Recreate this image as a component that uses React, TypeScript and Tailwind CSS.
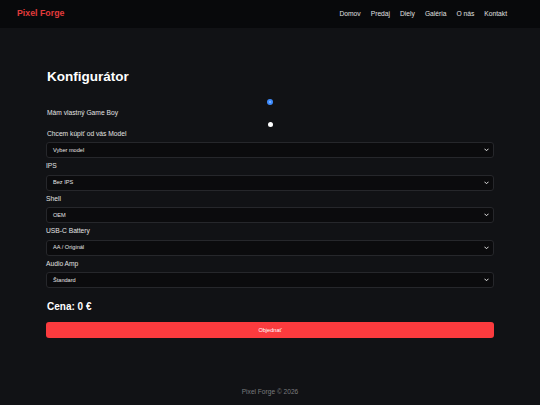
import React from "react";

const font = { fontFamily: '"Liberation Sans", Arial, sans-serif' };

function Chevron() {
  return (
    <svg width="5" height="4" viewBox="0 0 10 8" fill="none" className="shrink-0">
      <path d="M1.5 2 L5 5.5 L8.5 2" stroke="#e5e5e5" strokeWidth="2" strokeLinecap="round" strokeLinejoin="round" />
    </svg>
  );
}

function Select({ value, first }: { value: string; first?: boolean }) {
  return (
    <div
      role="combobox"
      className={`flex h-[16px] items-center justify-between rounded-[3px] border border-[#26272b] bg-[#0b0b0d] pl-[6px] pr-[4px] text-[5.6px] text-[#e5e5e5] ${
        first ? "mt-[4px]" : "mt-[4.5px]"
      }`}
    >
      <span>{value}</span>
      <Chevron />
    </div>
  );
}

function Label({ text }: { text: string }) {
  return (
    <div className="mt-[4px] h-[8px] text-[6.7px] leading-[8px] text-[#e2e2e2]">{text}</div>
  );
}

export default function App() {
  const nav = ["Domov", "Predaj", "Diely", "Galéria", "O nás", "Kontakt"];
  return (
    <div className="flex h-[405px] w-[540px] flex-col bg-[#111215]" style={font}>
      <header className="flex h-[28px] items-center justify-between bg-[#08090b] pl-[17px] pr-[33px]">
        <div className="text-[8.8px] font-bold text-[#e23b3b]">Pixel Forge</div>
        <nav className="flex gap-[10px] text-[6.7px] text-[#e0e0e0]">
          {nav.map((n) => (
            <span key={n}>{n}</span>
          ))}
        </nav>
      </header>
      <main className="flex flex-1 flex-col px-[46px]">
        <h1 className="ml-[1px] mt-[41px] h-[16px] text-[13.5px] font-bold leading-[16px] text-white">
          Konfigurátor
        </h1>
        <div className="mt-[12px] flex h-[10px] items-center justify-center">
          <span className="flex h-[6px] w-[6px] items-center justify-center rounded-full bg-[#3d8bfd]">
            <span className="h-[2px] w-[2px] rounded-full bg-[#8fbcff]" />
          </span>
        </div>
        <div className="ml-[1px] mt-[2px] h-[8px] text-[6.7px] leading-[8px] text-[#e2e2e2]">
          Mám vlastný Game Boy
        </div>
        <div className="mt-[2px] flex h-[10px] items-center justify-center">
          <span className="h-[5px] w-[5px] rounded-full bg-white" />
        </div>
        <div className="ml-[1px] mt-[1px] h-[8px] text-[6.7px] leading-[8px] text-[#e2e2e2]">
          Chcem kúpiť od vás Model
        </div>
        <Select value="Vyber model" first />
        <Label text="IPS" />
        <Select value="Bez IPS" />
        <Label text="Shell" />
        <Select value="OEM" />
        <Label text="USB-C Battery" />
        <Select value="AA / Originál" />
        <Label text="Audio Amp" />
        <Select value="Štandard" />
        <div className="ml-[1px] mt-[13px] h-[12px] text-[10px] font-bold leading-[12px] text-white">
          Cena: 0 €
        </div>
        <button className="mt-[9px] flex h-[16px] w-full items-center justify-center rounded-[3px] bg-[#fb3b3e] text-[5.6px] text-white">
          Objednať
        </button>
        <footer className="mt-auto mb-[8px] h-[10px] text-center text-[6.6px] leading-[10px] text-[#7a7b7e]">
          Pixel Forge © 2026
        </footer>
      </main>
    </div>
  );
}
